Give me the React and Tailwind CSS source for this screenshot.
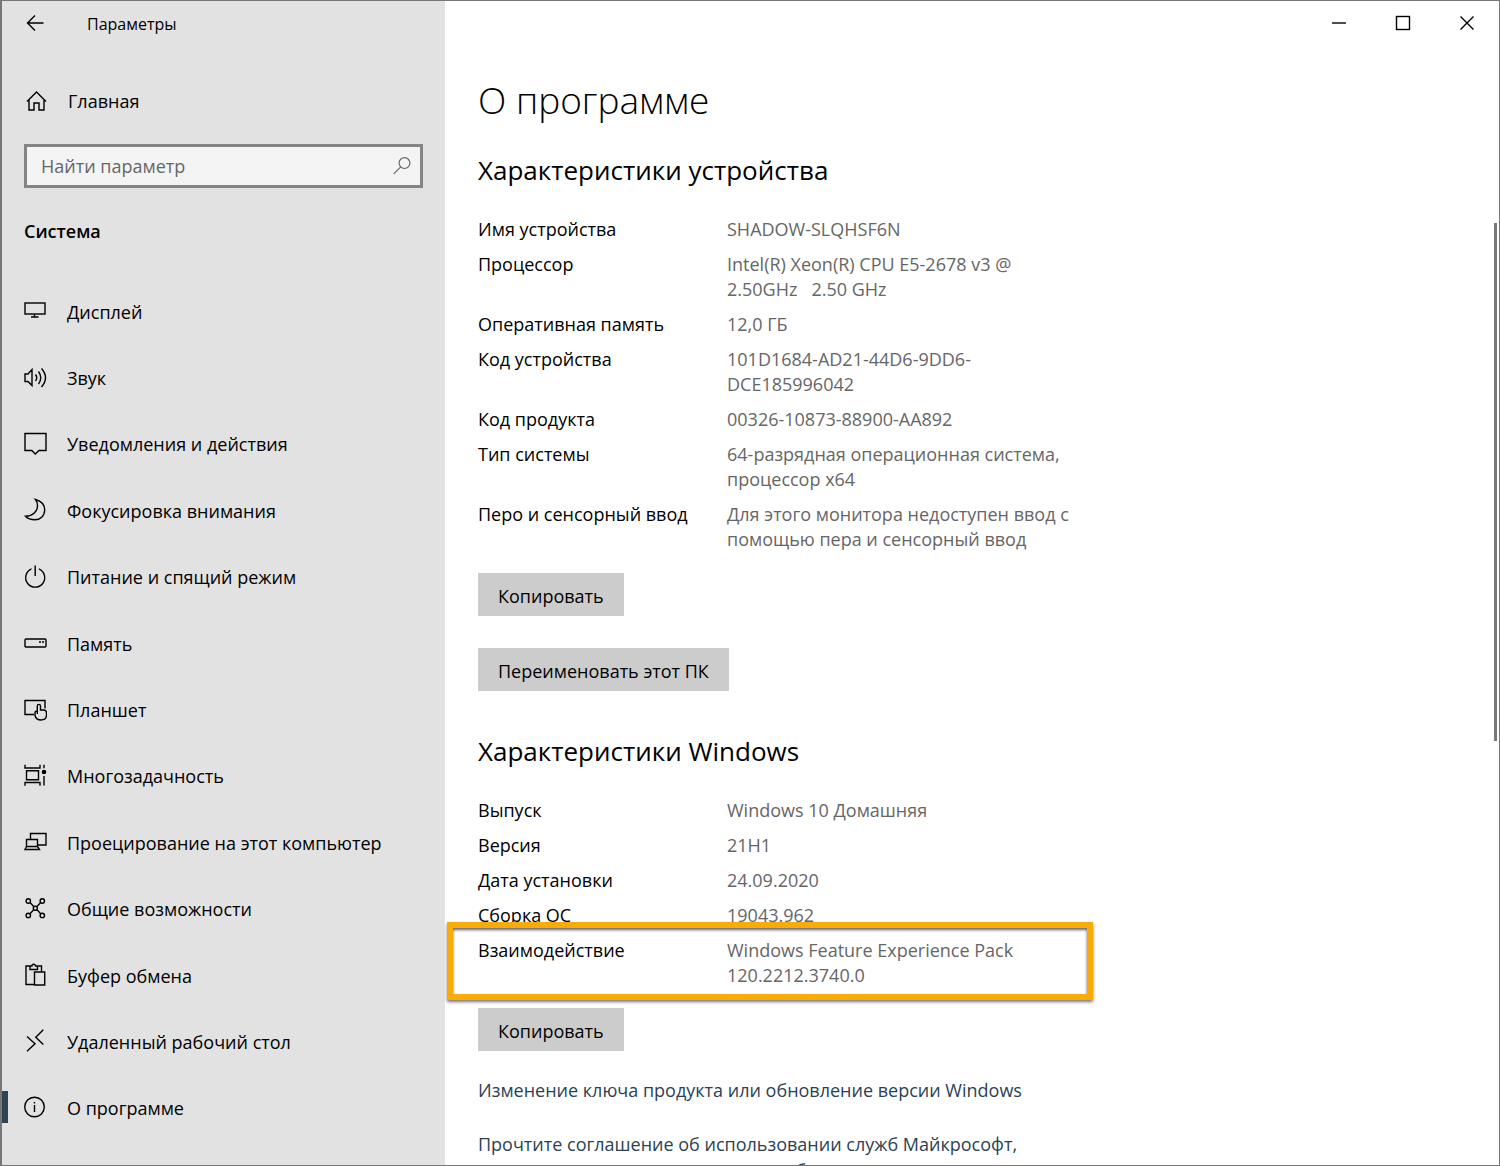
const navItems = [
  { label: "Дисплей", icon: <><rect x="2" y="4" width="20" height="11" /><path d="M11.5 15v3M8 18h7.5" /></> },
  { label: "Звук", icon: <path d="M9 3.5v16L5 15.5H2V8h3zM12.5 8.5q2.5 3.2 0 6.5M15.5 5.5q4.5 6.2 0 12.5M18.5 2.5q8 9.2 0 18.5" /> },
  { label: "Уведомления и действия", icon: <path d="M2 1.5H23V18.5H16L12.3 22 8.8 18.5H2z" /> },
  { label: "Фокусировка внимания", icon: <path d="M12.5 1.5C18 3 21.7 7 21.7 12C21.7 18 17 21.8 12 21.8C8 21.8 4.5 20.5 2.5 18.3C10 18 14.5 13 14.5 8C14.5 5.5 13.8 3 12.5 1.5z" /> },
  { label: "Питание и спящий режим", icon: <path d="M12.2 0.5V11M8.5 3.9A9.5 9.5 0 1 0 15.9 3.9" /> },
  { label: "Память", icon: <><rect x="2" y="8" width="21" height="8" rx="1" /><path d="M16 11h2M19 11h2" /></> },
  { label: "Планшет", icon: <path d="M11 16.5H2V2.5H22V10.5M14.3 16V8a1.6 1.6 0 0 1 3.2 0V12H20.5q3 0 3 3v2q0 5-5.500 5-5 0-6-4.500v-2.700q0-1.800 2.300-1.800" /> },
  { label: "Многозадачность", icon: <><path d="M2 0.800v3.200h15V0.800M2 21.700v-3.200h15v3.200M3.500 6.800h12v9H3.500zM21 0.800v3.500M21 12v9.500" /><circle cx="21" cy="8" r="1.600" fill="currentColor" /></> },
  { label: "Проецирование на этот компьютер", icon: <path d="M7.500 9V3.500H23V15H15M3.500 17V9.500H14.500V17M3.500 16.500L2 19.500H16.500L14.500 16.500z" /> },
  { label: "Общие возможности", icon: <><circle cx="5.300" cy="4" r="2.200" /><circle cx="19.300" cy="4" r="2.200" /><circle cx="12.300" cy="11.200" r="2" /><circle cx="5.300" cy="18.400" r="2.200" /><circle cx="19.300" cy="18.400" r="2.200" /><path d="M7 5.600l3.700 4M17.700 5.600l-3.700 4M7 16.800l3.700-4M17.700 16.800l-3.700-4" /></> },
  { label: "Буфер обмена", icon: <path d="M11 21.500H3V3H7M14 3H18.500V9M7 3V6.500H14.500V3H12.500a1.800 1.800 0 0 0-3.600 0H7M11.500 9H21.700V22H11.500z" /> },
  { label: "Удаленный рабочий стол", icon: <path d="M4 7.500l8 7.200-8 7.500M20.300 0.800l-7.500 7.500 7.500 7.300" /> },
  { label: "О программе", icon: <><circle cx="11.500" cy="11" r="9.800" /><path d="M11.500 9v7M11.500 6v1.500" /></>, active: true },
];

const deviceSpecs = [
  ["Имя устройства", ["SHADOW-SLQHSF6N"]],
  ["Процессор", ["Intel(R) Xeon(R) CPU E5-2678 v3 @", "2.50GHz\u00a0\u00a0 2.50 GHz"]],
  ["Оперативная память", ["12,0 ГБ"]],
  ["Код устройства", ["101D1684-AD21-44D6-9DD6-", "DCE185996042"]],
  ["Код продукта", ["00326-10873-88900-AA892"]],
  ["Тип системы", ["64-разрядная операционная система,", "процессор x64"]],
  ["Перо и сенсорный ввод", ["Для этого монитора недоступен ввод с", "помощью пера и сенсорный ввод"]],
];

const windowsSpecs = [
  ["Выпуск", ["Windows 10 Домашняя"]],
  ["Версия", ["21H1"]],
  ["Дата установки", ["24.09.2020"]],
  ["Сборка ОС", ["19043.962"]],
  ["Взаимодействие", ["Windows Feature Experience Pack", "120.2212.3740.0"], true],
];

function Icon({ children, className = "size-6" }) {
  return (
    <svg viewBox="0 0 24 24" fill="none" stroke="currentColor" strokeWidth="1.4" aria-hidden="true" className={`shrink-0 ${className}`}>
      {children}
    </svg>
  );
}

function Specs({ rows }) {
  return (
    <dl className="flex flex-col gap-[10px] leading-[25px]">
      {rows.map(([name, lines, marked]) => (
        <div key={name} className="relative flex">
          <dt className="w-[249px] shrink-0">{name}</dt>
          <dd className="whitespace-nowrap text-[#666]">
            {lines.map((line) => (
              <span key={line} className="block">{line}</span>
            ))}
          </dd>
          {marked && (
            <span className="absolute -top-4 -bottom-3 -left-[31px] w-[646px] border-[6px] border-[#f9ac08] shadow-[0_2px_3px_#0008,inset_0_2px_3px_#0009]" />
          )}
        </div>
      ))}
    </dl>
  );
}

function Action({ children }) {
  return <button type="button" className="block h-[43px] bg-[#ccc] px-5 pt-1">{children}</button>;
}

export default function App() {
  return (
    <div className="flex h-screen overflow-hidden border border-l-2 border-[#777] bg-white font-['Open_Sans','Noto_Sans',sans-serif] text-[18px] text-black">
      <aside className="flex w-[443px] shrink-0 flex-col bg-[#e2e2e2] pb-[23px]">
        <header className="flex h-[46px] shrink-0 items-center gap-10 pl-[21px]">
          <button type="button" aria-label="Назад" className="pb-0.5">
            <Icon><path d="M20.500 12H4.500M12 4.500L4.500 12 12 19.500" /></Icon>
          </button>
          <span className="text-[16px]">Параметры</span>
        </header>
        <a href="#home" className="mt-[30px] flex h-12 shrink-0 items-center gap-5 pl-[22px]">
          <Icon><path d="M3 12.500L12.500 3 22 12.500M5 10.500V21H10V14H15V21H20V10.500" /></Icon>
          Главная
        </a>
        <label className="mx-[22px] mt-[19px] flex h-11 shrink-0 items-center border-[3px] border-[#858583] bg-[#f4f4f4] pr-2 pl-[14px] text-[#666]">
          <input type="search" aria-label="Найти параметр" placeholder="Найти параметр" className="min-w-0 flex-1 bg-transparent outline-none placeholder:text-[#666]" />
          <Icon className="size-5"><circle cx="15" cy="8.500" r="6.500" /><path d="M10.500 13L2 21.500" /></Icon>
        </label>
        <h2 className="mt-7 h-[30px] shrink-0 pl-[22px] leading-[30px] font-semibold">Система</h2>
        <nav className="mt-[33px] flex min-h-0 flex-1 flex-col">
          {navItems.map(({ label, icon, active }) => (
            <a key={label} href="#section" aria-current={active ? "page" : undefined} className="relative flex min-h-0 flex-1 items-center gap-5 pl-[21px]">
              {active && <span className="absolute left-0 mb-1 h-8 w-1.5 bg-[#2f4357]" />}
              <Icon className="mb-0.5 size-6">{icon}</Icon>
              {label}
            </a>
          ))}
        </nav>
      </aside>
      <div className="relative flex min-w-0 flex-1 flex-col">
        <div className="flex h-11 shrink-0 justify-end">
          <button type="button" aria-label="Свернуть" className="grid w-16 place-items-center"><Icon><path d="M5 12H19" /></Icon></button>
          <button type="button" aria-label="Развернуть" className="grid w-16 place-items-center"><Icon><rect x="5.500" y="5.500" width="13" height="13" /></Icon></button>
          <button type="button" aria-label="Закрыть" className="grid w-16 place-items-center"><Icon><path d="M5.500 5.500L18.500 18.500M18.500 5.500L5.500 18.500" /></Icon></button>
        </div>
        <main className="min-h-0 flex-1 overflow-hidden pl-[33px]">
          <h1 className="mt-7 text-[37px] leading-[54px] font-light">О программе</h1>
          <h2 className="mt-[25px] mb-[29px] text-[26px] leading-[36px]">Характеристики устройства</h2>
          <Specs rows={deviceSpecs} />
          <div className="mt-[21px] flex flex-col items-start gap-8">
            <Action>Копировать</Action>
            <Action>Переименовать этот ПК</Action>
          </div>
          <h2 className="mt-[42px] mb-[29px] text-[26px] leading-[36px]">Характеристики Windows</h2>
          <Specs rows={windowsSpecs} />
          <div className="mt-5">
            <Action>Копировать</Action>
          </div>
          <div className="mt-[26px] flex flex-col items-start gap-7 leading-[26px] text-[#2b3f55]">
            <a href="#product-key">Изменение ключа продукта или обновление версии Windows</a>
            <a href="#terms">Прочтите соглашение об использовании служб Майкрософт,<br />распространяющееся на наши службы</a>
          </div>
        </main>
        <div className="absolute top-[222px] right-[2px] h-[518px] w-[3px] bg-[#777]" />
      </div>
    </div>
  );
}
